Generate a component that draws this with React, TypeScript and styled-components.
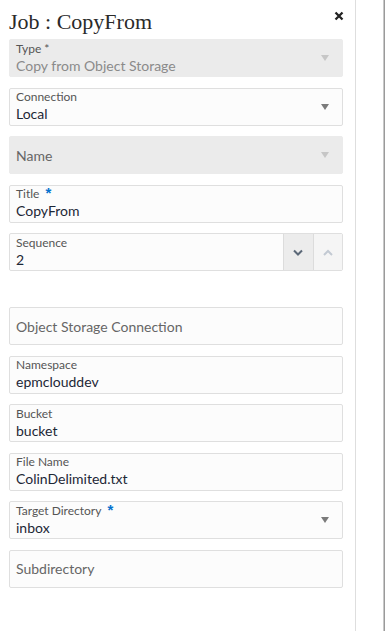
import React from "react";
import styled, { createGlobalStyle, css } from "styled-components";

const Global = createGlobalStyle`
  html, body { margin: 0; padding: 0; background: #fff; }
  body { font-family: Lato, "Liberation Sans", sans-serif; }
  * { box-sizing: border-box; }
`;

const Page = styled.div`
  display: flex;
  width: 385px;
  height: 631px;
  overflow: hidden;
`;

const Panel = styled.div`
  width: 356px;
  border-right: 1px solid #dedede;
  padding: 0 12px 0 9px;
  display: flex;
  flex-direction: column;
`;

const Gutter = styled.div`
  flex: 1;
`;

const EdgeBar = styled.div`
  width: 2px;
  background: #9a9a9a;
  border-left: 1px solid #c8c8c8;
`;

const Header = styled.div`
  height: 39px;
  display: flex;
  align-items: flex-start;
  justify-content: space-between;
`;

const Title = styled.h1`
  margin: 0;
  padding-top: 10px;
  font-family: "Liberation Serif", "Times New Roman", serif;
  font-weight: normal;
  font-size: 22px;
  color: #2a2a2a;
  line-height: 24px;
`;

const Close = styled.button`
  border: 0;
  background: none;
  padding: 0;
  margin: 11px -1px 0 0;
  width: 10px;
  height: 10px;
  display: flex;
  cursor: pointer;
`;

const Fields = styled.div`
  display: flex;
  flex-direction: column;
  gap: 10.5px;
`;

const Spacer = styled.div`
  height: 36px;
`;

const Field = styled.div<{ $disabled?: boolean }>`
  height: 38px;
  display: flex;
  align-items: stretch;
  border: 1px solid #dfdfdf;
  border-radius: 2px;
  background: #fcfcfc;
  ${(p) =>
    p.$disabled &&
    css`
      background: #ebebeb;
      border-color: #ebebeb;
    `}
`;

const Content = styled.div`
  flex: 1;
  min-width: 0;
  display: flex;
  flex-direction: column;
  justify-content: center;
  padding: 0 6px;
`;

const Label = styled.div`
  font-size: 12px;
  line-height: 14px;
  color: #555;
  display: flex;
  align-items: flex-start;
`;

const Required = styled.span`
  color: #0572ce;
  font-weight: bold;
  font-size: 15px;
  line-height: 12px;
  margin-left: 6px;
  font-family: "Liberation Sans", sans-serif;
`;

const Value = styled.div<{ $disabled?: boolean }>`
  font-size: 14px;
  line-height: 19px;
  color: ${(p) => (p.$disabled ? "#8a8a8a" : "#1c2736")};
`;

const Placeholder = styled.div`
  font-size: 14px;
  line-height: 19px;
  color: #666;
`;

const Arrow = styled.div<{ $disabled?: boolean }>`
  width: 34px;
  display: flex;
  align-items: center;
  justify-content: center;
  &::after {
    content: "";
    border-left: 4.5px solid transparent;
    border-right: 4.5px solid transparent;
    border-top: 6px solid ${(p) => (p.$disabled ? "#c6c6c6" : "#7b7b7b")};
  }
`;

const StepButton = styled.div<{ $disabled?: boolean }>`
  width: 29.5px;
  border-left: 1px solid #dcdcdc;
  background: ${(p) => (p.$disabled ? "#f5f5f5" : "#ececec")};
  display: flex;
  align-items: center;
  justify-content: center;
  color: ${(p) => (p.$disabled ? "#c3cad3" : "#5b6878")};
`;

const Chevron = ({ up }: { up?: boolean }) => (
  <svg width="10" height="7" viewBox="0 0 10 7">
    <path
      d={up ? "M1 6 L5 2 L9 6" : "M1 1.5 L5 5.5 L9 1.5"}
      fill="none"
      stroke="currentColor"
      strokeWidth="2"
    />
  </svg>
);

type FProps = {
  label?: string;
  value?: string;
  placeholder?: string;
  disabled?: boolean;
  select?: boolean;
  required?: boolean;
  star?: boolean;
};

const FormField = ({ label, value, placeholder, disabled, select, required, star }: FProps) => (
  <Field $disabled={disabled}>
    <Content>
      {placeholder ? (
        <Placeholder>{placeholder}</Placeholder>
      ) : (
        <>
          <Label>
            {label}
            {star && "\u00a0*"}
            {required && <Required>*</Required>}
          </Label>
          <Value $disabled={disabled}>{value}</Value>
        </>
      )}
    </Content>
    {select && <Arrow $disabled={disabled} />}
  </Field>
);

export default function App() {
  return (
    <>
      <Global />
      <Page>
        <Panel>
          <Header>
            <Title>Job : CopyFrom</Title>
            <Close aria-label="Close">
              <svg width="10" height="10" viewBox="0 0 10 10">
                <path d="M1.5 1.5 L8.5 8.5 M8.5 1.5 L1.5 8.5" stroke="#222" strokeWidth="2.3" />
              </svg>
            </Close>
          </Header>
          <Fields>
            <FormField label="Type" star value="Copy from Object Storage" disabled select />
            <FormField label="Connection" value="Local" select />
            <FormField placeholder="Name" disabled select />
            <FormField label="Title" required value="CopyFrom" />
            <Field>
              <Content>
                <Label>Sequence</Label>
                <Value>2</Value>
              </Content>
              <StepButton>
                <Chevron />
              </StepButton>
              <StepButton $disabled>
                <Chevron up />
              </StepButton>
            </Field>
          </Fields>
          <Spacer />
          <Fields>
            <FormField placeholder="Object Storage Connection" />
            <FormField label="Namespace" value="epmclouddev" />
            <FormField label="Bucket" value="bucket" />
            <FormField label="File Name" value="ColinDelimited.txt" />
            <FormField label="Target Directory" required value="inbox" select />
            <FormField placeholder="Subdirectory" />
          </Fields>
        </Panel>
        <Gutter />
        <EdgeBar />
      </Page>
    </>
  );
}
